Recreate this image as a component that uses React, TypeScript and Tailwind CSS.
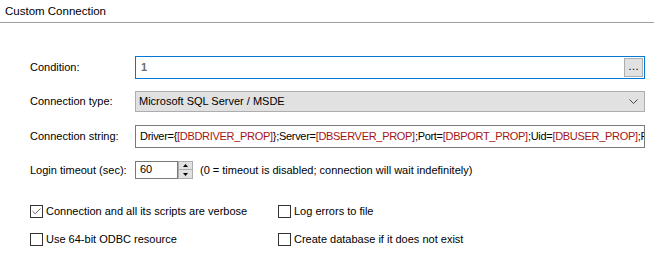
import { Check } from 'lucide-react';

// Windows-style form controls
function CheckBox({ label, checked }: { label: string; checked?: boolean }) {
  return (
    <div className="flex items-center h-[13px]">
      <div className="w-[13px] h-[13px] border border-[#333333] bg-white flex items-center justify-center">
        {checked && <Check className="w-[11px] h-[11px] text-[#555555]" strokeWidth={2} />}
      </div>
      <span className="ml-[3px] leading-[13px] whitespace-nowrap">{label}</span>
    </div>
  );
}

function Red({ children }: { children: string }) {
  return <span className="text-[#a31515]">{children}</span>;
}

export default function App() {
  return (
    <div className="w-[654px] h-[267px] bg-white text-black text-[11px] font-['Liberation_Sans',Arial,sans-serif] overflow-hidden whitespace-nowrap">
      <div className="h-[22px] pl-[5px] pt-[3px] leading-[16px] text-[11.5px]">Custom Connection</div>
      <div className="h-px bg-[#a0a0a0]" />

      <div className="pl-[30px] pr-[9px] pt-[33px] flex flex-col">
        {/* Condition */}
        <div className="flex items-center h-[23px]">
          <div className="w-[105px]">Condition:</div>
          <div className="flex-1 h-[23px] border border-[#0078d7] bg-white flex items-center pl-[5px] pr-[1px]">
            <span className="flex-1 text-[#6d6d6d] font-bold">1</span>
            <div className="w-[19px] h-[19px] border border-[#adadad] bg-[#e1e1e1] flex items-center justify-center leading-none pb-[3px]">…</div>
          </div>
        </div>

        {/* Connection type */}
        <div className="flex items-center h-[21px] mt-[12px]">
          <div className="w-[105px]">Connection type:</div>
          <div className="flex-1 h-[21px] border border-[#adadad] bg-[#e1e1e1] flex items-center pl-[3px] pr-[6px]">
            <span className="flex-1">Microsoft SQL Server / MSDE</span>
            <svg width="9" height="5" viewBox="0 0 9 5" className="text-[#444444]">
              <path d="M0.5 0.5 L4.5 4.5 L8.5 0.5" fill="none" stroke="currentColor" strokeWidth="1" />
            </svg>
          </div>
        </div>

        {/* Connection string */}
        <div className="flex items-center h-[23px] mt-[13px]">
          <div className="w-[105px]">Connection string:</div>
          <div className="flex-1 min-w-0 h-[23px] border border-[#7a7a7a] bg-white flex items-center pl-[4px] overflow-hidden tracking-[-0.3px]">
            <span>
              Driver={'{'}<Red>[DBDRIVER_PROP]</Red>{'}'};Server=<Red>[DBSERVER_PROP]</Red>;Port=<Red>[DBPORT_PROP]</Red>;Uid=<Red>[DBUSER_PROP]</Red>;P
            </span>
          </div>
        </div>

        {/* Login timeout */}
        <div className="flex items-center h-[18px] mt-[13px]">
          <div className="w-[105px]">Login timeout (sec):</div>
          <div className="w-[43px] h-[18px] border border-[#7a7a7a] bg-white pl-[4px] leading-[14px]">60</div>
          <div className="w-[15px] h-[18px] flex flex-col">
            <div className="h-[9px] border border-[#adadad] bg-[#e1e1e1] flex items-center justify-center">
              <svg width="5" height="3" viewBox="0 0 5 3"><path d="M0 3 L2.5 0 L5 3 Z" fill="#000" /></svg>
            </div>
            <div className="h-[9px] border border-[#adadad] border-t-0 bg-[#e1e1e1] flex items-center justify-center">
              <svg width="5" height="3" viewBox="0 0 5 3"><path d="M0 0 L2.5 3 L5 0 Z" fill="#000" /></svg>
            </div>
          </div>
          <span className="ml-[7px]">(0 = timeout is disabled; connection will wait indefinitely)</span>
        </div>

        {/* Options */}
        <div className="grid grid-cols-[248px_1fr] gap-y-[15px] mt-[26px]">
          <CheckBox label="Connection and all its scripts are verbose" checked />
          <CheckBox label="Log errors to file" />
          <CheckBox label="Use 64-bit ODBC resource" />
          <CheckBox label="Create database if it does not exist" />
        </div>
      </div>
    </div>
  );
}
